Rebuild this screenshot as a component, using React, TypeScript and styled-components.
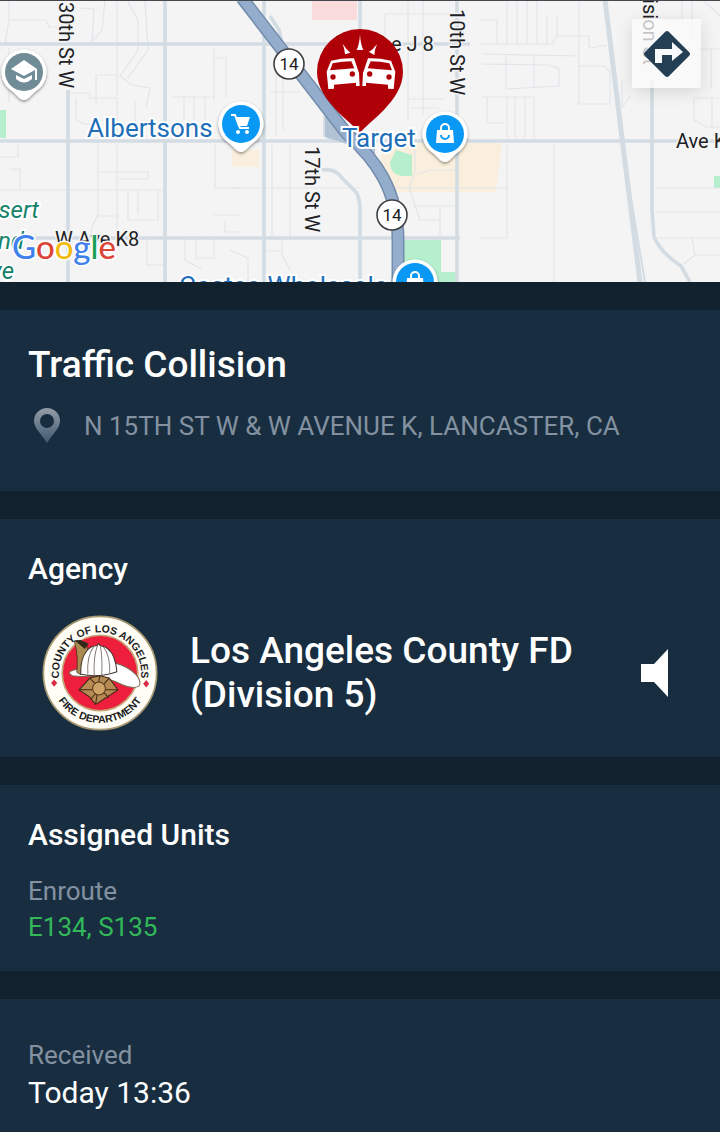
import React from "react";
import styled, { createGlobalStyle } from "styled-components";

const GlobalStyle = createGlobalStyle`
    * {
        box-sizing: border-box;
    }
    body {
        margin: 0;
        background: #182e40;
        font-family: Roboto, "Liberation Sans", sans-serif;
    }
`;

const Page = styled.main`
    display: flex;
    flex-direction: column;
    gap: 28px;
    background: #11212e;
`;
const MapArea = styled.div`
    position: relative;
    border-top: 1px solid #45474d;
`;
const MapDrawing = styled.svg`
    display: block;
    width: 100%;
    height: 281px;
    background: #f4f4f5;
`;
const DirectionsButton = styled.button`
    position: absolute;
    top: 18px;
    right: 19px;
    display: flex;
    align-items: center;
    justify-content: center;
    width: 69px;
    height: 69px;
    padding: 0;
    border: none;
    background: rgba(250, 250, 251, 0.76);
    box-shadow: 0 4px 16px rgba(0, 0, 0, 0.12);
    cursor: pointer;
`;
const Card = styled.section<{ $bottom?: number }>`
    display: flex;
    flex-direction: column;
    padding: 32px 28px ${props => props.$bottom ?? 26}px;
    background: #182e40;
`;
const Title = styled.h1`
    margin: 0;
    color: #fff;
    font-size: 37px;
    font-weight: 500;
    line-height: 46px;
`;
const Heading = styled.h2`
    margin: 0;
    color: #fff;
    font-size: 30px;
    font-weight: 500;
    line-height: 36px;
`;
const AddressRow = styled.div`
    display: flex;
    align-items: center;
    gap: 24px;
    margin-top: 18px;
    padding-left: 6px;
`;
const Address = styled.span`
    color: #8391a0;
    font-size: 26px;
    line-height: 40px;
`;
const AgencyRow = styled.div`
    display: flex;
    align-items: center;
    gap: 32px;
    margin-top: 28px;
    padding: 0 22px 0 14px;
`;
const AgencyName = styled.div`
    flex: 1;
    max-width: 400px;
    margin-right: auto;
    color: #fff;
    font-size: 37px;
    font-weight: 500;
    line-height: 44px;
`;
const SpeakerButton = styled.button`
    display: flex;
    padding: 0;
    border: none;
    background: none;
    cursor: pointer;
`;
const Details = styled.dl<{ $top?: number }>`
    margin: ${props => props.$top ?? 0}px 0 0;
`;
const Label = styled.dt`
    color: #8391a0;
    font-size: 26px;
    line-height: 36px;
`;
const Value = styled.dd<{ $units?: boolean }>`
    margin: 0;
    color: ${props => (props.$units ? "#32b858" : "#fff")};
    font-size: ${props => (props.$units ? 26 : 30)}px;
    line-height: ${props => (props.$units ? 36 : 40)}px;
`;

const RoadLabel = styled.text`
    fill: #202124;
    font-size: 20px;
    stroke: #f4f4f5;
    stroke-width: 3px;
    paint-order: stroke;
`;
const PlaceLabel = styled.text`
    fill: #1e6fb8;
    font-size: 26px;
    stroke: #fff;
    stroke-width: 4px;
    paint-order: stroke;
`;
const ParkLabel = styled(PlaceLabel)`
    fill: #15826a;
    font-size: 24px;
    font-style: italic;
`;
const LogoText = styled.text`
    font-family: Lato, sans-serif;
    font-size: 33px;
    font-weight: 500;
    stroke: #fff;
    stroke-width: 3px;
    paint-order: stroke;
`;
const SealText = styled.text`
    fill: #191b1c;
    font-family: "Liberation Sans", sans-serif;
    font-size: 31px;
    font-weight: 700;
`;

interface PlacePinProps {
    x: number;
    y: number;
    color?: string;
    children: React.ReactNode;
}

function PlacePin({ x, y, color = "#0a98f5", children }: PlacePinProps) {
    return (
        <g transform={`translate(${x} ${y})`}>
            <path
                d="M0 28 C-4 28-7 23-12 19 A22.5 22.5 0 1 1 12 19 C7 23 4 28 0 28Z"
                fill="#fff"
                filter="url(#pin-shadow)"
            />
            <circle r="19" fill={color} />
            {children}
        </g>
    );
}

function Bag() {
    return (
        <g>
            <path d="M-8-4H8L9 9H-9Z" fill="#fff" />
            <path d="M-4-3V-6a4 4 0 0 1 8 0V-3" fill="none" stroke="#fff" strokeWidth="2" />
            <path d="M-4 1a4 4 0 0 0 8 0" fill="none" stroke="#0a98f5" strokeWidth="2" />
        </g>
    );
}

function Shield({ x, y }: { x: number; y: number }) {
    return (
        <g transform={`translate(${x} ${y})`}>
            <circle r="15" fill="#fff" stroke="#3d3f42" strokeWidth="1.6" />
            <text y="6" textAnchor="middle" fontSize="17" fill="#202124">
                14
            </text>
        </g>
    );
}

function CrashedCar() {
    return (
        <g>
            <path
                d="M303 182Q338 174 372 175L387 219L389 258H378V248L312 254V266L295 267L290 215ZM308 190L300 211L373 205L364 184Q335 184 308 190Z"
                fill="#fff"
                fillRule="evenodd"
            />
            <circle cx="309" cy="231" r="8" fill="#b00007" />
            <circle cx="367" cy="222" r="8" fill="#b00007" />
        </g>
    );
}

function IncidentPin() {
    return (
        <g>
            <path
                d="M360 133C353 123 317 101 317 72A43 43 0 0 1 403 72C403 101 367 123 360 133Z"
                fill="#b00007"
            />
            <g transform="translate(230 0) scale(.33333)">
                <CrashedCar />
                <g transform="translate(786 0) scale(-1 1)">
                    <CrashedCar />
                </g>
                <path
                    d="M390 102Q391 130 400 150H380Q389 130 390 102ZM338 131Q348 148 361 158L345 163Q344 146 338 131ZM441 133Q430 148 417 156L433 165Q434 149 441 133Z"
                    fill="#fff"
                />
            </g>
        </g>
    );
}

function StreetMap() {
    return (
        <MapDrawing viewBox="0 1 720 281" preserveAspectRatio="xMidYMid slice" role="img" aria-label="Map">
            <defs>
                <filter id="pin-shadow" x="-30%" y="-30%" width="160%" height="170%">
                    <feDropShadow dx="0" dy="1.5" stdDeviation="1.6" floodOpacity=".45" />
                </filter>
            </defs>
            <path d="M312 0H357V20H312Z" fill="#fbdcdc" />
            <path d="M385 143H502L496 192H390L380 160ZM232 150H259V167H232Z" fill="#faefdc" />
            <path
                d="M396 150L412 155V176H402Q390 174 390 162ZM404 240H441V282H404ZM441 272H457V282H441ZM0 110H6V138H0ZM714 176H720V188H714Z"
                fill="#b5efcd"
            />
            {/* residential streets */}
            <g fill="none" stroke="#e1e5e9" strokeWidth="1.2">
                <path d="M9 0V20H46L49 27H62M9 20L5 44M80 8L94 9L92 43M105 0L102 30L91 43M117 0V96M127 0L138 20V50L120 76L132 85L150 88L146 108M145 0L148 50L128 78M9 48V102" />
                <path d="M68 93H90V98H117M96 75H116M96 75V104M76 98V120L84 124H96M117 98V141M135 101V121M172 97H215M184 97V120M194 97V120M205 97V120M214 48V100M214 58H226V97" />
                <path d="M0 157H18V145M10 169H20V190M0 190H165M98 145V216H117M98 172H148V179H118M117 145V238M128 190V220H158V190M138 190V214M98 216Q92 222 90 238M147 238V265H165M185 238V260L201 269M196 238V258H214V238M215 145V188H240M214 215H240M225 220V232H240" />
                <path d="M276 45V135M283 46V130M270 92H300M272 145V238M290 145V238M282 238V255L290 270M264 251H282M230 250L248 258V282M230 188H360M385 14H450M385 14V36M408 0V120M423 0V115M408 99H445M410 108H440M415 145V172L409 188L420 220H440M413 206H457M440 208V238M395 188H507M418 174L430 170H457" />
                <path d="M480 20H497V44M507 0V44M517 0V44M527 0V44M537 0V44M547 16V44M557 16V36H589V48M480 44H552L557 36M579 0V66M482 54L579 56M482 64L549 65L559 69V86L506 89V56M534 55V88M579 66H605L610 72V104H579V66M590 48L607 45M482 97H534V138M507 97V138M515 97V138M525 97V138M487 97V123H505" />
                <path d="M507 145V238H480M554 144V282M622 80V108L630 96M656 188H720M656 212H720M656 238H720M692 238L695 255L684 264M695 255H720M700 49V88M711 49V88M695 49H720M694 98V120L706 127H720M682 0V20M692 0V38M703 0L720 16M694 98H720M712 98V127" />
            </g>
            {/* main roads */}
            <g fill="none" stroke="#d3dce3" strokeWidth="3.6">
                <path d="M0 44H470M0 141H720M0 238H460M68 90V282M165 0V282M264 0V282M360 0V40M457 0V282M652 80V210L654 237Q661 253 681 266L690 282" />
                <path d="M605 0L621 130L640 282" strokeWidth="5" />
                <path d="M621 138L645 282" strokeWidth="2" />
                <path d="M270 16L279 30L284 52M325 112V137M327 137L370 145M322 170Q335 168 342 178L356 192Q360 198 360 210V282" />
            </g>
            <path d="M325 110V137L350 145L375 155V142L360 134L345 128Z" fill="#b3c3d6" />
            <path
                d="M242-2L347 134C376 160 398 190 398 240V284"
                fill="none"
                stroke="#738cab"
                strokeWidth="13"
            />
            <path
                d="M242-2L347 134C376 160 398 190 398 240V284"
                fill="none"
                stroke="#95adcc"
                strokeWidth="10"
            />
            <RoadLabel transform="translate(59 2) rotate(90)">30th St W</RoadLabel>
            <RoadLabel transform="translate(305 146) rotate(90)">17th St W</RoadLabel>
            <RoadLabel transform="translate(450 9) rotate(90)">10th St W</RoadLabel>
            <RoadLabel transform="translate(643 65) rotate(90)" textAnchor="end">
                ision St
            </RoadLabel>
            <RoadLabel x="391" y="51">
                e J 8
            </RoadLabel>
            <RoadLabel x="676" y="148">
                Ave K
            </RoadLabel>
            <RoadLabel x="55" y="246">
                W Ave K8
            </RoadLabel>
            <ParkLabel x="39" y="218" textAnchor="end">
                sert
            </ParkLabel>
            <ParkLabel x="24" y="249" textAnchor="end">
                nd
            </ParkLabel>
            <ParkLabel x="14" y="279" textAnchor="end">
                ve
            </ParkLabel>
            <Shield x={289} y={64} />
            <Shield x={392} y={215} />
            <PlaceLabel x="87" y="137">
                Albertsons
            </PlaceLabel>
            <PlaceLabel x="179" y="295">
                Costco Wholesale
            </PlaceLabel>
            <IncidentPin />
            <PlaceLabel x="342" y="147">
                Target
            </PlaceLabel>
            <PlacePin x={24} y={72} color="#6f8c97">
                <path d="M-13-3L0-12L13-3V8H11V-2L0 4ZM-8 3L0 7L8 3V7Q0 14-8 7Z" fill="#fff" />
            </PlacePin>
            <PlacePin x={241} y={124}>
                <path d="M-10-9H-6L-1 4H8" fill="none" stroke="#fff" strokeWidth="2" />
                <path d="M-6-7H9L6 2H-3Z" fill="#fff" />
                <circle cx="-3" cy="8" r="2" fill="#fff" />
                <circle cx="6" cy="8" r="2" fill="#fff" />
            </PlacePin>
            <PlacePin x={445} y={134}>
                <Bag />
            </PlacePin>
            <PlacePin x={415} y={282}>
                <Bag />
            </PlacePin>
            <LogoText x="12" y="259">
                <tspan fill="#4081ec">G</tspan>
                <tspan fill="#dc4437">o</tspan>
                <tspan fill="#f2b90c">o</tspan>
                <tspan fill="#4081ec">g</tspan>
                <tspan fill="#1c9d58">l</tspan>
                <tspan fill="#dc4437">e</tspan>
            </LogoText>
        </MapDrawing>
    );
}

function DirectionsIcon() {
    return (
        <svg width="48" height="48" viewBox="-24 -24 48 48" aria-hidden="true">
            <path
                d="M-2-22Q0-24 2-22L22-2Q24 0 22 2L2 22Q0 24-2 22L-22 2Q-24 0-22-2Z"
                fill="#243e54"
            />
            <path d="M-12 9V-5H5V-12L16-2L5 7V1H-5V9Z" fill="#f7f9fb" />
        </svg>
    );
}

function LocationIcon() {
    return (
        <svg width="26" height="36" viewBox="0 0 26 36" aria-hidden="true">
            <defs>
                <linearGradient id="location-fill" x1="0" y1="0" x2="0" y2="1">
                    <stop offset="0" stopColor="#939da6" />
                    <stop offset="1" stopColor="#405872" />
                </linearGradient>
            </defs>
            <path
                d="M13 0A13 13 0 0 1 26 13C26 20 20 24 13 35C6 24 0 20 0 13A13 13 0 0 1 13 0ZM13 6A7 7 0 1 0 13 20A7 7 0 1 0 13 6Z"
                fill="url(#location-fill)"
                fillRule="evenodd"
            />
        </svg>
    );
}

function AgencySeal() {
    return (
        <svg width="116" height="116" viewBox="36 45 344 344" role="img" aria-label="Agency seal">
            <defs>
                <path id="seal-top" d="M93 259A122 122 0 1 1 323 259" />
                <path id="seal-bottom" d="M60 217A148 148 0 0 0 356 217" />
            </defs>
            <circle cx="208" cy="217" r="168" fill="#fffdf6" stroke="#aa9a72" strokeWidth="5" />
            <circle cx="208" cy="217" r="112" fill="#ee1f3d" stroke="#c5a577" strokeWidth="5" />
            <SealText textAnchor="middle">
                <textPath href="#seal-top" startOffset="50%">
                    COUNTY OF LOS ANGELES
                </textPath>
            </SealText>
            <SealText textAnchor="middle">
                <textPath href="#seal-bottom" startOffset="50%">
                    FIRE DEPARTMENT
                </textPath>
            </SealText>
            <path d="M72 236L81 247L72 258L63 247ZM345 238L354 249L345 260L336 249Z" fill="#d92b48" />
            <path
                d="M118 213Q136 203 158 206L255 188Q292 198 315 222Q333 244 323 256Q307 266 274 252Q236 232 190 226Q148 229 126 225Q115 220 118 213Z"
                fill="#fff"
                stroke="#7a6551"
                strokeWidth="3"
            />
            <path d="M132 122L168 128L171 148L156 180L151 222L139 215Q145 170 132 122Z" fill="#ac8b51" stroke="#2e2415" strokeWidth="2" />
            <path d="M132 120L151 119L174 130L163 146Z" fill="#33271a" />
            <path
                d="M151 221Q149 176 169 151Q180 136 199 136L203 130L209 136Q235 139 248 168Q257 190 258 213Q206 232 151 221Z"
                fill="#fff"
                stroke="#40352c"
                strokeWidth="3"
            />
            <path
                d="M190 138Q168 166 172 222M200 137Q188 170 191 224M209 137Q216 170 213 224M218 140Q239 166 237 219"
                fill="none"
                stroke="#8b837c"
                strokeWidth="3"
            />
            <path
                d="M146 267L178 232L207 225L235 232L261 267L228 289L195 310L177 288Z"
                fill="#b78a52"
                stroke="#3f2a18"
                strokeWidth="3"
            />
            <path d="M178 232L234 290M235 232L181 294M146 267H261M207 225L195 310" stroke="#3f2a18" strokeWidth="3" />
            <circle cx="205" cy="263" r="19" fill="#cda266" stroke="#5b3b20" strokeWidth="3" />
        </svg>
    );
}

function SpeakerIcon() {
    return (
        <svg width="30" height="50" viewBox="0 0 30 50" aria-hidden="true">
            <path d="M1 16H14L28 1V49L14 34H1Z" fill="#fff" />
        </svg>
    );
}

export default function App() {
    return (
        <>
            <GlobalStyle />
            <Page>
                <MapArea>
                    <StreetMap />
                    <DirectionsButton aria-label="Directions">
                        <DirectionsIcon />
                    </DirectionsButton>
                </MapArea>
                <Card $bottom={45}>
                    <Title>Traffic Collision</Title>
                    <AddressRow>
                        <LocationIcon />
                        <Address>N 15TH ST W &amp; W AVENUE K, LANCASTER, CA</Address>
                    </AddressRow>
                </Card>
                <Card>
                    <Heading>Agency</Heading>
                    <AgencyRow>
                        <AgencySeal />
                        <AgencyName>Los Angeles County FD (Division 5)</AgencyName>
                        <SpeakerButton aria-label="Play audio">
                            <SpeakerIcon />
                        </SpeakerButton>
                    </AgencyRow>
                </Card>
                <Card>
                    <Heading>Assigned Units</Heading>
                    <Details $top={20}>
                        <Label>Enroute</Label>
                        <Value $units>E134, S135</Value>
                    </Details>
                </Card>
                <Card $bottom={20}>
                    <Details $top={6}>
                        <Label>Received</Label>
                        <Value>Today 13:36</Value>
                    </Details>
                </Card>
            </Page>
        </>
    );
}
